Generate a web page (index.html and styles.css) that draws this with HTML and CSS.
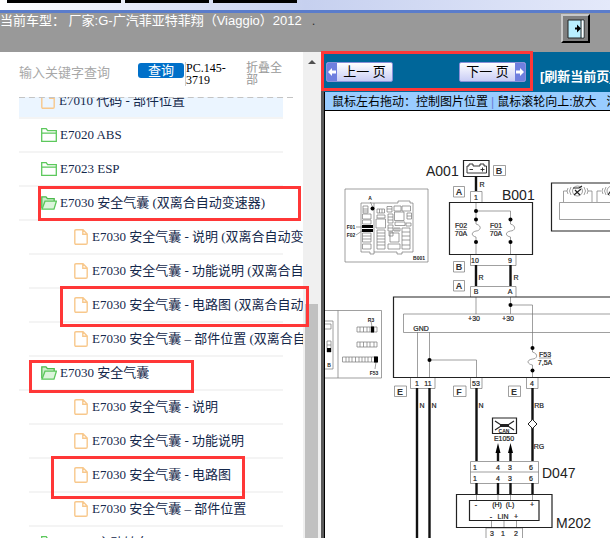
FILE: index.html
```html
<!DOCTYPE html>
<html lang="zh-CN">
<head>
<meta charset="utf-8">
<title>E7030 安全气囊 - 电路图</title>
<link rel="stylesheet" href="styles.css">
</head>
<body>
<svg class="sprite" width="0" height="0">
  <symbol id="folder" viewBox="0 0 16 14"><path d="M.7 13.3V.7H5.2L6.6 2.7H15.3V13.3ZM.7 5.2H15.3" fill="none" stroke="#5cc85c" stroke-width="1.3"/></symbol>
  <symbol id="folder-open" viewBox="0 0 16 14"><path d="M.8 12.5V.8H5L6.4 2.6H13.2V5" fill="#c9efc9" stroke="#4cb94c" stroke-width="1.3"/><path d="M1 13.2L4 5.2H15.4L13 13.2Z" fill="#dcf5dc" stroke="#5cc85c" stroke-width="1.3"/></symbol>
  <symbol id="file" viewBox="0 0 14 16"><path d="M2 .8H9L13.2 5V14Q13.2 15.2 12 15.2H2Q.8 15.2 .8 14V2Q.8 .8 2 .8ZM8.8 1V5.2H13" fill="none" stroke="#f8c88c" stroke-width="1.4"/></symbol>
</svg>
<div class="page">
  <div class="toolbar"><span class="tab tab-wide"></span><span class="tab"></span><span class="tab"></span></div>
  <header class="banner">
    <span class="model">当前车型： 厂家:G-广汽菲亚特菲翔（Viaggio）2012</span>
    <span class="dot">.</span>
    <button class="exit" aria-label="退出">
      <svg width="18" height="20" viewBox="0 0 18 20"><path d="M1 1H17V19H1Z" fill="#b9efff" stroke="#222"/><path d="M15.500 1.500V18.500" stroke="#fff" stroke-width="2"/><path d="M14 1V19" stroke="#222"/><path d="M8 8.500H10V5.500L14 9.500L10 13.500V10.500H8Z" fill="#000"/></svg>
    </button>
  </header>
  <div class="body">
    <aside class="sidebar">
      <form class="search">
        <input type="text" placeholder="输入关键字查询" aria-label="输入关键字查询">
        <button type="button">查询</button>
        <span class="code">PC.145-3719</span>
        <a class="collapse" href="#">折叠全部</a>
      </form>
      <div class="tree">
        <ul class="list">
          <li class="row active"><svg class="leaf"><use href="#file"/></svg><a href="#">E7010 代码 - 部件位置</a></li>
          <li class="row"><svg class="dir"><use href="#folder"/></svg><a href="#">E7020 ABS</a></li>
          <li class="row"><svg class="dir"><use href="#folder"/></svg><a href="#">E7023 ESP</a></li>
          <li class="row"><svg class="dir"><use href="#folder-open"/></svg><a href="#">E7030 安全气囊 (双离合自动变速器)</a><i class="mark mark-group"></i></li>
          <li>
            <ul class="list nested">
              <li class="row"><svg class="leaf"><use href="#file"/></svg><a href="#">E7030 安全气囊 - 说明 (双离合自动变速器)</a></li>
              <li class="row"><svg class="leaf"><use href="#file"/></svg><a href="#">E7030 安全气囊 - 功能说明 (双离合自动变速器)</a></li>
              <li class="row"><svg class="leaf"><use href="#file"/></svg><a href="#">E7030 安全气囊 - 电路图 (双离合自动变速器)</a><i class="mark mark-long"></i></li>
              <li class="row"><svg class="leaf"><use href="#file"/></svg><a href="#">E7030 安全气囊 – 部件位置 (双离合自动变速器)</a></li>
            </ul>
          </li>
          <li class="row"><svg class="dir"><use href="#folder-open"/></svg><a href="#">E7030 安全气囊</a><i class="mark mark-short"></i></li>
          <li>
            <ul class="list nested">
              <li class="row"><svg class="leaf"><use href="#file"/></svg><a href="#">E7030 安全气囊 - 说明</a></li>
              <li class="row"><svg class="leaf"><use href="#file"/></svg><a href="#">E7030 安全气囊 - 功能说明</a></li>
              <li class="row"><svg class="leaf"><use href="#file"/></svg><a href="#">E7030 安全气囊 - 电路图</a><i class="mark mark-leaf"></i></li>
              <li class="row"><svg class="leaf"><use href="#file"/></svg><a href="#">E7030 安全气囊 – 部件位置</a></li>
            </ul>
          </li>
          <li class="row"><svg class="dir"><use href="#folder"/></svg><a href="#">E7040 主动转向</a></li>
        </ul>
      </div>
    </aside>
    <div class="scrollbar"><span class="arrow"></span><span class="thumb"></span></div>
    <main class="viewer">
      <nav class="pager">
        <button class="page-btn prev"><svg width="10" height="18" viewBox="0 0 10 18"><path d="M0 0H10V18H0Z" fill="#6f7fdf"/><path d="M1 9L5 5V7.500H9V10.500H5V13Z" fill="#fff"/></svg><span>上一 页</span></button>
        <button class="page-btn next"><span>下一 页</span><svg width="10" height="18" viewBox="0 0 10 18"><path d="M0 0H10V18H0Z" fill="#6f7fdf"/><path d="M9 9L5 5V7.500H1V10.500H5V13Z" fill="#fff"/></svg></button>
        <a class="refresh" href="#">[刷新当前页]</a>
        <i class="mark mark-pager"></i>
      </nav>
      <p class="hint">鼠标左右拖动：控制图片位置<span class="bar">|</span>鼠标滚轮向上:放大 &nbsp; 滚轮向下:缩小</p>
      <div class="canvas">
        <svg width="285" height="427" viewBox="325 111 285 427" role="img">
          <g class="thin">
            <path d="M345 189H428V262H345ZM325 310.500H381.500V378H325M338 310.500V378M325 321H333V369H325M325 324H331V329H325M327 341H331V352H327ZM327 345H331M370.500 202L372.500 207M356 227H362M356 235L362 231"/>
            <path d="M361 203H398V201H410V203H413V252H402V254H397V252H374V254H370V252H361ZM374 203V252"/>
            <path d="M363 206H368V213H363ZM363 209H368M363 211H368M362.500 214H371V219H362.500ZM362.500 220H371V224H362.500ZM362.500 233H371V242H362.500ZM362.500 236H371M362.500 239H371M362.500 244H371V249H362.500Z"/>
            <path d="M377 209H384.500V213H377ZM379.500 209V213M382 209V213M377 215H385V218H377ZM376 219H385.500V228H376ZM377 230H385V249H377ZM377 233H385M377 236H385M377 239H385M377 242H385M377 245H385"/>
            <path d="M387 206.500H392V212H387ZM387 209H392M388 214H393V223H388ZM388 217H393M388 220H393M388 225H393V231H388ZM388 228H393M394 206H401V211H394ZM402 206H410.500V211H402ZM394.500 212H404V220.500H394.500ZM407 213H411.500V219H407ZM407 216H411.500M395 222H405V225.500H395ZM389 232H393V236H389ZM394 228H400V231H394ZM390 233H399V242H390ZM388 244H400V249H388ZM402 228H410V249H402ZM402 232H410M402 236H410M402 240H410M402 245H410M406 223H411V226H406ZM396 228V231M398 228V231"/>
            <path d="M357 327H377V332H357ZM360 327V332M363.500 327V332M367 327V332M370 327V332M374 327V332M357 342H377V347H357ZM360 342V347M363.500 342V347M367 342V347M370 342V347M374 342V347M342.500 357H377V362H342.500ZM346 357V362M349 357V362M352 357V362M355.500 357V362M359 357V362M362 357V362M365 357V362M368 357V362M371.500 357V362M371 321L372 327M375 369L376 362"/>
            <path d="M493.500 165.500H505.500V175.500H493.500ZM453.500 186.500H464.500V197H453.500ZM453.500 261.500H464.500V272H453.500ZM453.500 280.500H464.500V291H453.500ZM394.500 386H406.500V396.500H394.500ZM453.500 386H466V396.500H453.500ZM508.500 386H520.500V396.500H508.500Z"/>
            <path d="M470.500 202V191.500H482V202M470.500 254V265.500H516V254M470.500 297V286.500H516V297M410.500 378V388.500H435V378M470.500 378V388.500H482V378M526.500 378V388.500H538V378M470.500 461.500H538.500V483.500H470.500ZM470.500 472H538.500M486 538V528H522.500V538M491.500 520V528M504 520V528M516.500 520V528"/>
            <path d="M476 202V224C483 226 480 231 476 231C471 232 471 236 476 237V254M476 211H510.500V224C517 226 515 231 510.500 231C505 232 505 236 510.500 237V254M456 229.500H467M490 229.500H501"/>
            <path d="M476 297V314M510.500 297V314M510.500 305H532.500V352C539 354 537 359 532.500 359C526 360 527 364 532.500 365V377M539 358H551M610 314H403.500V332.500H610M417.500 332V378M429.500 332V378M429.500 360H476.500V378M476.500 494V500M498 494V500M510.500 494V500M532.500 494V500"/>
            <path d="M610 202.500H559.500V219.500H610M563.500 202V191H567M592 202V191H588M597 202V191H601M571 187Q568 191 571 195M568 188Q566 191 568 194M584 187Q587 191 584 195M587 188Q589 191 587 194M606 187Q603 191 606 195M603 188Q601 191 603 194"/>
            <circle cx="577.500" cy="191" r="5"/><circle cx="612" cy="191" r="5"/>
          </g>
          <g class="frame">
            <path d="M463.500 160.500H489V176.500H463.500ZM449.500 202.500H532.500V254.500H449.500ZM610 297H393.500V377.500H610M610 183H551.500V231H610M492.500 418H516.500V433.500H492.500ZM456.500 494.500H552V527.500H456.500ZM469.500 500.500H539V520.500H469.500Z"/>
            <path d="M467 166H469V164H473V166H480V164H484V166H486.500V173H467ZM469.500 169.500H473M480.500 169.500H484.500M482.500 167.500V171.500" stroke-width=".9"/>
            <path d="M573 188H579L582 186M574 195L581 189M575 190L580 195M608 195L612 189M495 421L501 425H508L514 421M495 430L501 426H508L514 430M501 425.500H508"/>
            <path d="M500 425.500H509" stroke-width="3"/>
          </g>
          <path class="wire" d="M476 176V191M476 265V286M510.500 265V286M417 388V538M429.500 388V538M476.500 388V461M532.500 388V461M476.500 483V494M498 483V494M510.500 483V494M532.500 483V494M498 452V461M510.500 452V461"/>
          <path d="M362 225H373V228H362ZM362 229H373V232H362ZM371 326.500H374V332.500H371ZM374 356.500H378V362.500H374ZM327 348H331V352H327ZM498 443L500.500 453H495.500ZM510.500 443L513 453H508Z"/>
          <path d="M532.500 419.500L537 424L532.500 428.500L528 424Z" fill="#fff" stroke="#222"/>
          <g>
            <circle cx="372.500" cy="208.500" r="2"/><circle cx="476" cy="211" r="2"/><circle cx="476" cy="219.500" r="2"/><circle cx="510.500" cy="219.500" r="2"/><circle cx="476" cy="242" r="2"/><circle cx="510.500" cy="242" r="2"/><circle cx="510.500" cy="305" r="2"/><circle cx="532.500" cy="348" r="2"/><circle cx="532.500" cy="370.500" r="2"/><circle cx="429.500" cy="360" r="2"/>
          </g>
          <g class="name"><text x="426" y="176">A001</text><text x="502" y="200">B001</text><text x="542" y="478">D047</text><text x="556" y="528">M202</text></g>
          <g class="tag"><text x="499" y="174">B</text><text x="459" y="195">A</text><text x="459" y="270">B</text><text x="459" y="289">A</text><text x="400" y="395">E</text><text x="459" y="395">F</text><text x="514" y="395">E</text></g>
          <g class="pin">
            <text x="482" y="187">R</text><text x="476" y="200">1</text><text x="461" y="228">F02</text><text x="461" y="236">70A</text><text x="496" y="228">F01</text><text x="496" y="236">70A</text>
            <text x="475" y="263">10</text><text x="510" y="263">9</text><text x="481" y="280">R</text><text x="516" y="280">R</text><text x="476" y="294">B</text><text x="510" y="294">A</text>
            <text x="474" y="321">+30</text><text x="508" y="321">+30</text><text x="421" y="331">GND</text><text x="545" y="357">F53</text><text x="545" y="365">7,5A</text>
            <text x="417" y="386">1</text><text x="428" y="386">11</text><text x="476" y="386">53</text><text x="532" y="386">4</text>
            <text x="422" y="408">N</text><text x="434" y="408">N</text><text x="481" y="408">N</text><text x="539" y="408">RB</text><text x="539" y="449">RG</text><text x="504" y="441">E1050</text>
            <text x="475" y="470">1</text><text x="498" y="470">4</text><text x="510" y="470">3</text><text x="531" y="470">6</text><text x="475" y="481">1</text><text x="498" y="481">4</text><text x="510" y="481">3</text><text x="531" y="481">6</text>
            <text x="476" y="507">-</text><text x="497" y="507">(H)</text><text x="510" y="507">(L)</text><text x="532" y="507">+</text><text x="491" y="519">-</text><text x="503" y="519">LIN</text><text x="516" y="519">+</text>
            <text x="492" y="536">3</text><text x="503" y="536">1</text><text x="516" y="536">2</text>
          </g>
          <g class="tiny"><text x="370" y="200">A</text><text x="351" y="229">F01</text><text x="351" y="237">F02</text><text x="419" y="260">B001</text><text x="371" y="322">R3</text><text x="374" y="375">F53</text><text x="329" y="367">B</text><text x="504" y="433">CAN</text></g>
        </svg>
      </div>
    </main>
  </div>
</div>
</body>
</html>
```
FILE: styles.css
```css
* { box-sizing: border-box; }
body { margin: 0; font: 13px/16px "Liberation Sans", "Noto Sans CJK SC", sans-serif; }
a { color: inherit; text-decoration: none; }
button { font: inherit; padding: 0; cursor: pointer; }
.sprite { display: none; }
.page { height: 100vh; display: flex; flex-direction: column; overflow: hidden; background: #fff; }

.toolbar {
  flex: none; height: 13px; padding-left: 7px; display: flex; align-items: flex-start; gap: 4px;
  background: linear-gradient(90deg, #fff, #c6d0ef 50%, #e4e9fa);
  border-bottom: 3px solid #5a7ccb;
}
.tab { width: 84px; height: 3px; background: #000; }
.tab-wide { width: 114px; }

.banner { flex: none; height: 39px; display: flex; align-items: flex-start; padding-right: 20px; background: #999; color: #fff; white-space: nowrap; }
.dot { margin-left: 10px; color: #333; }
.exit {
  display: flex; align-items: center; justify-content: center; width: 29px; height: 29px;
  margin: 1px 0 0 auto; background: #808080; border: 2px solid;
  border-color: #c8c8c8 #000 #000 #c8c8c8;
}

.body { flex: 1; min-height: 0; display: flex; }
.sidebar { flex: 0 0 303px; min-width: 0; display: flex; flex-direction: column; }
.search { flex: none; height: 45px; margin: 0 20px 0 19px; display: flex; align-items: flex-start; padding-top: 10px; }
.search input { width: 119px; height: 20px; padding: 0; border: 0; outline: 0; font: inherit; }
.search input::placeholder { color: #a8a8a8; }
.search button { width: 46px; height: 15px; margin-top: 1px; border: 0; border-radius: 3px; background: #0070c9; color: #fff; line-height: 15px; }
.code { width: 42px; margin-left: 1px; border-left: 1px solid #ccc; font: 12px/12px "Liberation Serif", serif; }
.collapse { width: 36px; margin-left: 19px; color: #999; font-size: 12px; line-height: 12px; }

.tree { flex: 1; min-height: 0; position: relative; clip-path: inset(0 -30px 0 0); }
.tree::before { content: ""; position: absolute; z-index: 1; top: -1px; left: 19px; right: 10px; border-top: 2px dashed #c4c4c4; }
.list { list-style: none; margin: 0; padding: 0; }
.tree > .list { margin: -12px 20px 0 19px; }
.list .nested { margin-left: 10px; }
.row {
  position: relative; height: 34px; display: flex; align-items: center; padding-left: 22px;
  border-bottom: 2px solid #f4f4f4; color: #14284b; white-space: nowrap;
  font-family: "Liberation Serif", "Noto Sans CJK SC", serif;
}
.row a { min-width: 0; flex: 1; margin-right: -20px; overflow: hidden; }
.nested .row { padding-left: 45px; }
.active { background: #ebf5ff; }
.row svg { flex: none; }
.dir { width: 16px; height: 14px; margin-right: 3px; }
.leaf { width: 14px; height: 16px; margin-right: 4px; }

.mark { position: absolute; z-index: 2; border: 3px solid #ff3737; pointer-events: none; }
.mark-group { left: 19px; top: -1px; width: 263px; height: 35px; }
.mark-long { left: 31px; top: -3px; width: 249px; height: 41px; }
.mark-short { left: 10px; top: 3px; width: 165px; height: 33px; }
.mark-leaf { left: 22px; top: -3px; width: 194px; height: 43px; }
.mark-pager { left: -3px; top: -1px; width: 212px; height: 40px; }

.scrollbar { flex: 0 0 18px; display: grid; grid-template-rows: 252px 1fr; padding: 0 3px 0 2px; background: #f0f0f0; }
.arrow { justify-self: center; height: 4px; margin-top: 8px; border: 4px solid transparent; border-top: 0; border-bottom-color: #505050; }
.thumb { background: #c1c1c1; }

.viewer { flex: 1; min-width: 0; display: flex; flex-direction: column; border-left: 3px solid #5a5a5a; }
.pager { position: relative; flex: none; height: 40px; display: flex; align-items: flex-start; padding: 10px 0 0 2px; background: #069; }
.page-btn {
  flex: none; display: flex; align-items: stretch; width: 67px; height: 20px;
  border: 1px solid #8a90d8; border-radius: 2px; overflow: hidden;
  background: linear-gradient(#fff, #c9cdf5); color: #000; line-height: 18px;
}
.page-btn span { flex: 1; white-space: nowrap; }
.next { margin-left: 66px; }
.refresh { margin: 7px 0 0 14px; color: #fff; font-weight: bold; white-space: nowrap; }
.hint {
  flex: none; height: 19px; margin: 0; padding-left: 7px; overflow: hidden; white-space: nowrap;
  background: #9cf; border-left: 1px solid #000; border-bottom: 1px solid #000; font-size: 12px; line-height: 20px;
}
.bar { margin: 0 3px; color: #6a7fd8; }
.canvas { flex: 1; min-height: 0; overflow: hidden; border-left: 1px solid #000; }
.canvas svg { display: block; }

.thin { fill: none; stroke: #777; stroke-width: .7; }
.frame { fill: none; stroke: #222; stroke-width: 1.2; }
.wire { fill: none; stroke: #111; stroke-width: 2.4; }
.name { font-size: 14px; fill: #222; }
.tag { font-size: 9px; font-weight: bold; text-anchor: middle; fill: #333; }
.pin { font-size: 7px; text-anchor: middle; fill: #222; stroke: #222; stroke-width: .2; }
.tiny { font-size: 5px; font-weight: bold; text-anchor: middle; fill: #222; }
```
